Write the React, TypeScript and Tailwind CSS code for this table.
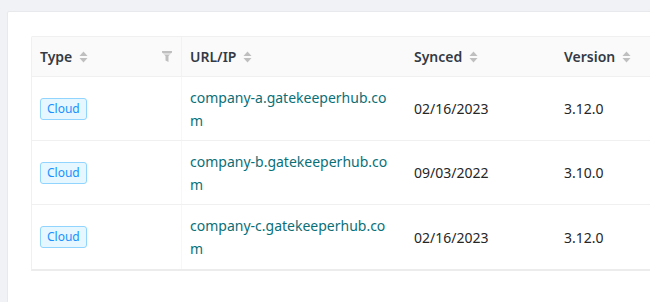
import React from "react";

const SortIcon = () => (
  <svg width="9" height="12" viewBox="0 0 9 12" className="ml-[7px] shrink-0">
    <path d="M4.5 0.5 L8.5 5 L0.5 5 Z" fill="#bfbfbf" />
    <path d="M4.5 11.5 L8.5 7 L0.5 7 Z" fill="#bfbfbf" />
  </svg>
);

const FilterIcon = () => (
  <svg width="10" height="11" viewBox="0 0 10 11">
    <path d="M0 0 H10 V1.5 L6.5 5 V11 L3.5 9.5 V5 L0 1.5 Z" fill="#bfbfbf" />
    <rect x="0" y="2.5" width="10" height="1" fill="#fafafa" />
  </svg>
);

const rows = [
  { host: "company-a.gatekeeperhub.co", synced: "02/16/2023", version: "3.12.0" },
  { host: "company-b.gatekeeperhub.co", synced: "09/03/2022", version: "3.10.0" },
  { host: "company-c.gatekeeperhub.co", synced: "02/16/2023", version: "3.12.0" },
];

export default function App() {
  return (
    <div
      className="w-[650px] h-[302px] overflow-hidden bg-[#f0f2f5] pt-[11px] pl-[7px]"
      style={{ fontFamily: '"Segoe UI", "Noto Sans", sans-serif' }}
    >
      <div className="w-[720px] h-[320px] bg-white border border-[#e8e9ec] rounded-[2px] pt-[24px] pl-[23px]">
        <div className="w-[680px] border-l border-t border-[#f0f0f0] border-b-2 border-b-[#ececec] rounded-tl-[2px] text-[14px] text-[#262626]">
          {/* header */}
          <div className="flex h-[40px] bg-[#fafafa] border-b border-[#f0f0f0] font-semibold text-[#333a45]">
            <div className="w-[150px] flex items-center pl-[8px] pr-[9px] border-r border-[#f2f2f2]">
              <span>Type</span>
              <SortIcon />
              <div className="ml-auto flex items-center">
                <FilterIcon />
              </div>
            </div>
            <div className="w-[224px] flex items-center pl-[8px]">
              <span>URL/IP</span>
              <SortIcon />
            </div>
            <div className="w-[150px] flex items-center pl-[8px]">
              <span>Synced</span>
              <SortIcon />
            </div>
            <div className="w-[150px] flex items-center pl-[8px]">
              <span>Version</span>
              <SortIcon />
            </div>
          </div>
          {rows.map((r, i) => (
            <div
              key={i}
              className={`flex h-[64px] ${i < rows.length - 1 ? "border-b border-[#f0f0f0]" : ""}`}
            >
              <div className="w-[150px] flex items-center pl-[8px] border-r border-[#f7f7f7]">
                <span className="inline-flex items-center h-[22px] px-[6px] text-[12px] leading-[20px] text-[#1890ff] bg-[#e6f7ff] border border-[#91d5ff] rounded-[3px]">
                  Cloud
                </span>
              </div>
              <div className="w-[224px] flex items-center pl-[8px] text-[#0b6f78] leading-[23px]">
                <div>
                  {r.host}
                  <br />m
                </div>
              </div>
              <div className="w-[150px] flex items-center pl-[8px]">{r.synced}</div>
              <div className="w-[150px] flex items-center pl-[8px]">{r.version}</div>
            </div>
          ))}
        </div>
      </div>
    </div>
  );
}
